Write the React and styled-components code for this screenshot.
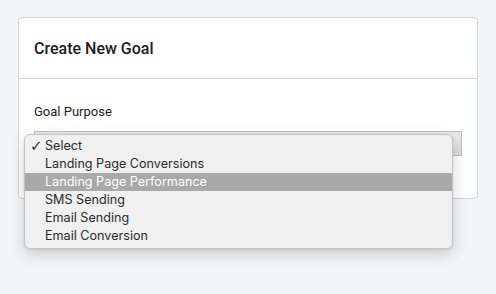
import React from 'react';
import styled, { createGlobalStyle } from 'styled-components';

const GlobalStyle = createGlobalStyle`
	body {
		margin: 0;
		background: #f3f6f9;
		font-family: Roboto, "Liberation Sans", sans-serif;
	}
`

const Page = styled.div`
	padding: 17px 18px 0;
	height: 294px;
	box-sizing: border-box;
`

const Card = styled.div`
	width: 460px;
	background: #fff;
	border: 1px solid #cfd4da;
	border-radius: 4px;
	box-sizing: border-box;
`

const CardHeader = styled.div`
	height: 60px;
	display: flex;
	align-items: center;
	padding: 0 15px;
	border-bottom: 1px solid #cfd4da;
	& > h2 {
		margin: 0;
		font-size: 16px;
		font-weight: 500;
		color: #1c1c1c;
	}
`

const CardBody = styled.div`
	padding: 25px 15px 42px;
`

const Label = styled.div`
	font-size: 13px;
	color: #222;
	margin-bottom: 12px;
`

const SelectWrap = styled.div`
	position: relative;
	height: 25px;
`

const SelectBox = styled.div`
	height: 25px;
	width: 428px;
	box-sizing: border-box;
	border: 1px solid #bdbdbd;
	background: linear-gradient(#e9e9e9, #dcdcdc);
	position: relative;
	&::after {
		content: '';
		position: absolute;
		right: 8px;
		top: 12px;
		width: 1px;
		height: 3px;
		background: #444;
	}
`

const Menu = styled.ul`
	position: absolute;
	left: -10px;
	top: 3px;
	width: 429px;
	margin: 0;
	padding: 2px 0 3px;
	list-style: none;
	box-sizing: border-box;
	background: #f0f0f0;
	border: 1px solid #c4c4c4;
	border-radius: 6px;
	box-shadow: 0 6px 16px rgba(0, 0, 0, 0.16), 0 1px 3px rgba(0, 0, 0, 0.08);
	font-family: Inter, "Noto Sans", sans-serif;
	font-size: 12.6px;
`

const Option = styled.li`
	position: relative;
	height: 18px;
	line-height: 18px;
	padding-left: 20px;
	color: ${({active}) => active ? '#fff' : '#2b2b2b'};
	background: ${({active}) => active ? '#a9a9a9' : 'transparent'};
	& > span {
		position: absolute;
		left: 5px;
		top: 0;
		font-family: "DejaVu Sans", sans-serif;
		font-size: 15px;
		color: #333;
	}
`

const options = [
	'Select',
	'Landing Page Conversions',
	'Landing Page Performance',
	'SMS Sending',
	'Email Sending',
	'Email Conversion',
]

function App() {
	return (
		<Page>
			<GlobalStyle />
			<Card>
				<CardHeader>
					<h2>Create New Goal</h2>
				</CardHeader>
				<CardBody>
					<Label>Goal Purpose</Label>
					<SelectWrap>
						<SelectBox />
						<Menu>
							{options.map((o, i) => (
								<Option key={o} active={i === 2}>
									{i === 0 && <span>✓</span>}
									{o}
								</Option>
							))}
						</Menu>
					</SelectWrap>
				</CardBody>
			</Card>
		</Page>
	);
}

export default App;
